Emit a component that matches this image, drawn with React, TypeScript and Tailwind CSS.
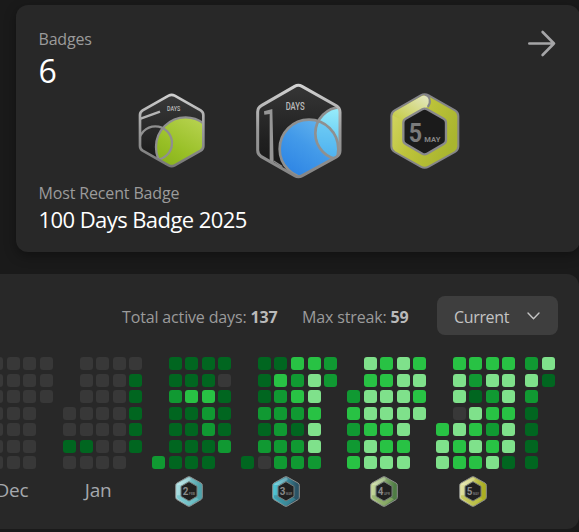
import React from "react";

const LEVELS: Record<string, string> = {
  " ": "bg-transparent",
  "0": "bg-[#383838]",
  "1": "bg-[#016620]",
  "2": "bg-[#109932]",
  "3": "bg-[#28c244]",
  "4": "bg-[#7fe18b]",
};

type Month = { name: string; badge?: { day: string; colors: [string, string, string] }; weeks: string[] };

// Each string is one week, Sunday to Saturday; a blank is a day outside the month.
const MONTHS: Month[] = [
  { name: "Dec", weeks: ["0000000", "0000000", "0000000", "0000000", "000    "] },
  { name: "Jan", weeks: ["   0010", "0000010", "0000000", "0000000", "011111 "] },
  { name: "FEB", badge: { day: "2", colors: ["#a9dde0", "#4fa3ab", "#70c3ca"] }, weeks: ["      2", "1121111", "1131111", "1132211", "101112 "] },
  { name: "MAR", badge: { day: "3", colors: ["#4fc3d2", "#2b5365", "#3a8d9d"] }, weeks: ["      1", "1112120", "1322222", "3232122", "3443442", "22     "] },
  { name: "APR", badge: { day: "4", colors: ["#c5d79a", "#4f7c45", "#8fae68"] }, weeks: ["  23223", "4344344", "3344334", "4444434", "3434   "] },
  { name: "MAY", badge: { day: "5", colors: ["#dfe0a0", "#aaae22", "#bcc048"] }, weeks: ["    344", "3440433", "3214343", "3423234", "3443441"] },
  { name: "", weeks: ["2421111", "41     "] },
];

function MonthBadge({ day, name, colors }: { day: string; name: string; colors: [string, string, string] }) {
  const id = "ring" + day;
  return (
    <svg viewBox="0 0 84 93" className="h-[31px] w-7 shrink-0">
      <defs>
        <linearGradient id={id} x1="0" y1="0.2" x2="1" y2="0.3">
          <stop offset="0.1" stopColor={colors[0]} />
          <stop offset="0.9" stopColor={colors[1]} />
        </linearGradient>
      </defs>
      <path d="M38 3Q42 1 46 3L78 21Q82 23 82 28V64Q82 68 78 71L46 90Q42 92 38 90L6 71Q2 68 2 64V28Q2 23 6 21Z" fill={`url(#${id})`} stroke="#8a8c8b" strokeWidth="3" />
      <path d="M6 58V64Q6 67 10 69L39 86Q42 88 45 86L72 70L58 62L42 72L18 58Z" fill={colors[2]} opacity=".7" />
      <path d="M40 5Q48 3 47 12L20 27L7 27Q6 24 9 23Z" fill="#fff" opacity=".25" />
      <path d="M42 17L66 31V61L42 75L18 61V31Z" fill="#202020" stroke="#777d7b" strokeWidth="3" strokeLinejoin="round" />
      <text x="23" y="58" fontSize="30" fontWeight="bold" fontFamily="Roboto, sans-serif" fill="#8b8b8b" textLength="17" lengthAdjust="spacingAndGlyphs">{day}</text>
      <text x="42" y="58" fontSize="9" fontWeight="bold" fontFamily="Roboto, sans-serif" fill="#777" textLength="18" lengthAdjust="spacingAndGlyphs">{name}</text>
    </svg>
  );
}

const HEX = "M116 47Q125 42 134 47L212 91Q220 96 220 105V198Q220 207 212 212L134 256Q125 261 116 256L38 212Q30 207 30 198V105Q30 96 38 91Z";

function FiftyDays() {
  return (
    <svg viewBox="0 39 270 228" className="h-[76px] w-[90px]">
      <defs>
        <clipPath id="hex50"><path d={HEX} /></clipPath>
        <linearGradient id="lime" x1=".8" y1="0" x2=".2" y2="1"><stop stopColor="#bad453" /><stop offset=".6" stopColor="#97bf25" /><stop offset="1" stopColor="#83ad19" /></linearGradient>
        <linearGradient id="steel50" x1="0" y1="0" x2="0" y2="1"><stop stopColor="#cfcfcf" /><stop offset=".5" stopColor="#9a9a9a" /><stop offset="1" stopColor="#777" /></linearGradient>
        <linearGradient id="dark50" x1="0" y1="0" x2="0" y2="1"><stop stopColor="#393939" /><stop offset="1" stopColor="#171717" /></linearGradient>
      </defs>
      <path d={HEX} fill="url(#dark50)" />
      <g clipPath="url(#hex50)" fill="none" stroke="#8f8f8f" strokeWidth="7">
        <circle cx="167" cy="201" r="89" fill="url(#lime)" />
        <circle cx="76" cy="189" r="50" />
        <path d="M32 116L90 95" stroke="#b5b5b5" />
      </g>
      <path d={HEX} fill="none" stroke="url(#steel50)" strokeWidth="8" />
      <text x="111" y="93" fontSize="21" fontWeight="500" fontFamily="Roboto, sans-serif" fill="#bdbdbd" textLength="40" lengthAdjust="spacingAndGlyphs">DAYS</text>
    </svg>
  );
}

const BIG_HEX = "M149 34Q160 28 171 34L274 92Q285 99 285 112V227Q285 239 274 246L172 302Q160 309 149 302L49 245Q38 238 38 226V111Q38 98 49 92Z";

function HundredDays() {
  return (
    <svg viewBox="0 24 330 288" className="h-24 w-[110px]">
      <defs>
        <clipPath id="hex100"><path d={BIG_HEX} /></clipPath>
        <clipPath id="zero"><circle cx="192" cy="222" r="88" /></clipPath>
        <linearGradient id="blue" x1=".9" y1="0" x2=".2" y2="1"><stop stopColor="#6ab9ee" /><stop offset=".5" stopColor="#439ae9" /><stop offset="1" stopColor="#2c83e4" /></linearGradient>
        <linearGradient id="cyan" x1=".5" y1="0" x2=".4" y2="1"><stop stopColor="#9aeefa" /><stop offset=".5" stopColor="#74d4f6" /><stop offset="1" stopColor="#50b6f2" /></linearGradient>
        <linearGradient id="steel100" x1="0" y1="0" x2="0" y2="1"><stop stopColor="#d2d2d2" /><stop offset=".5" stopColor="#999" /><stop offset="1" stopColor="#858585" /></linearGradient>
        <linearGradient id="dark100" x1="0" y1="0" x2="0" y2="1"><stop stopColor="#363636" /><stop offset=".6" stopColor="#202020" /><stop offset="1" stopColor="#161616" /></linearGradient>
      </defs>
      <path d={BIG_HEX} fill="url(#dark100)" />
      <g clipPath="url(#hex100)" fill="none" stroke="#8f9090" strokeWidth="8">
        <circle cx="192" cy="222" r="88" fill="url(#blue)" stroke="none" />
        <circle cx="290" cy="175" r="79" fill="url(#cyan)" stroke="none" />
        <circle cx="290" cy="175" r="79" fill="#4aa8ee" opacity=".35" stroke="none" clipPath="url(#zero)" />
        <circle cx="192" cy="222" r="88" />
        <circle cx="290" cy="175" r="79" />
      </g>
      <path d="M57 109L82 102L86 266L74 260V117L58 119Z" fill="#969696" />
      <path d="M86 258L112 275" fill="none" stroke="#8a8a8a" strokeWidth="4" />
      <path d={BIG_HEX} fill="none" stroke="url(#steel100)" strokeWidth="9" />
      <text x="122" y="105" fontSize="32" fontWeight="500" fontFamily="Roboto, sans-serif" fill="#bcbcbc" textLength="57" lengthAdjust="spacingAndGlyphs">DAYS</text>
    </svg>
  );
}

function MayBadge() {
  return (
    <svg viewBox="0 39 270 228" className="h-[76px] w-[90px]">
      <defs>
        <linearGradient id="olive" x1="0" y1="0" x2="1" y2=".5"><stop stopColor="#d6d96b" /><stop offset=".5" stopColor="#bdc33a" /><stop offset="1" stopColor="#a9b52f" /></linearGradient>
        <linearGradient id="fold" x1="0" y1="1" x2="1" y2="0"><stop stopColor="#c4cb43" /><stop offset="1" stopColor="#e5e8c5" /></linearGradient>
      </defs>
      <path d="M122 46Q134 39 146 46L225 91Q235 97 235 108V199Q235 210 225 216L146 260Q134 267 122 260L44 216Q34 210 34 199V108Q34 97 44 91Z" fill="url(#olive)" />
      <path d="M38 105Q39 98 47 93L124 49C138 41 151 52 149 68Q148 77 138 83L74 118Q51 117 38 105Z" fill="url(#fold)" />
      <path d="M122 46Q134 39 146 46L225 91Q235 97 235 108V199Q235 210 225 216L146 260Q134 267 122 260L44 216Q34 210 34 199V108Q34 97 44 91Z" fill="none" stroke="#858588" strokeWidth="6" />
      <path d="M134 44C151 47 154 68 143 81" fill="none" stroke="#858588" strokeWidth="6" />
      <path d="M127 88Q134 84 141 88L191 116Q198 120 198 128V180Q198 188 191 192L141 221Q134 225 127 221L77 192Q70 188 70 180V128Q70 120 77 116Z" fill="#1b1b1b" stroke="#89898c" strokeWidth="7" />
      <text x="86" y="185" fontSize="80" fontWeight="bold" fontFamily="Roboto, sans-serif" fill="#7b7b7b" textLength="40" lengthAdjust="spacingAndGlyphs">5</text>
      <text x="133" y="186" fontSize="24" fontWeight="bold" fontFamily="Roboto, sans-serif" fill="#858585" textLength="48" lengthAdjust="spacingAndGlyphs">MAY</text>
    </svg>
  );
}

function BadgesCard() {
  return (
    <section className="ml-4 h-[247px] w-[564px] rounded-xl bg-[#282828] shadow-[0_4px_12px_rgba(0,0,0,0.35)]">
      <div className="flex h-[78px] justify-between pl-[22.5px] pr-6">
        <div className="pt-[22px]">
          <div className="h-6 text-base leading-6 tracking-[-0.2px] text-[#9b9b9b]">Badges</div>
          <div className="h-8 text-[32px] leading-[40px] text-white">6</div>
        </div>
        <svg viewBox="0 0 28 27" className="mt-[25px] h-[27px] w-7 text-[#a5a5a7]" fill="none" stroke="currentColor" strokeWidth="2.6" strokeLinecap="round" strokeLinejoin="round">
          <path d="M1.3 13.5H26M14.6 2L26 13.5L14.6 25" />
        </svg>
      </div>
      <div className="flex h-24 items-center gap-[25px] pl-[114px]">
        <FiftyDays />
        <HundredDays />
        <MayBadge />
      </div>
      <div className="pl-[22.5px]">
        <div className="mt-[2px] h-6 text-base leading-6 tracking-[-0.15px] text-[#9b9b9b]">Most Recent Badge</div>
        <div className="h-8 text-[22px] leading-[29px] tracking-[-0.57px] text-white">100 Days Badge 2025</div>
      </div>
    </section>
  );
}

function ActivityCard() {
  return (
    <section className="mt-[22px] h-[255px] w-[579px] overflow-hidden rounded-r-xl bg-[#282828]">
      <div className="flex h-[83px] justify-end pr-[21px] pt-[22px]">
        <div className="flex h-[39px] items-center text-base text-[#9b9b9b]">
          <div className="mt-0.5 w-[180px] whitespace-nowrap tracking-[-0.15px]">Total active days: <b className="font-bold text-[#bababa]">137</b></div>
          <div className="mt-0.5 w-[135px] whitespace-nowrap tracking-[-0.15px]">Max streak: <b className="font-bold text-[#bababa]">59</b></div>
          <button className="flex h-[39px] w-[121px] items-center justify-between rounded-lg bg-[#3e3e3e] pl-[17px] pr-[18px] text-[#c4c4c4]">
            <span className="mt-0.5 tracking-[-0.35px]">Current</span>
            <svg viewBox="0 0 13 8" className="h-2 w-[13px]" fill="none" stroke="currentColor" strokeWidth="1.4" strokeLinecap="round" strokeLinejoin="round"><path d="M1 1L6.5 6.7L12 1" /></svg>
          </button>
        </div>
      </div>
      <div className="-ml-[26.2px] flex w-max gap-[10px]">
        {MONTHS.map((m, i) => (
          <div key={i} className="shrink-0">
            <div className="flex gap-[3.55px]">
              {m.weeks.map((w, j) => (
                <div key={j} className="flex flex-col gap-[3.55px]">
                  {w.split("").map((d, k) => <div key={k} className={`h-[13px] w-[13px] rounded-[3px] ${LEVELS[d]}`} />)}
                </div>
              ))}
            </div>
            <div className={`flex justify-center pt-[7px] ${m.badge ? "pr-[6px]" : m.name === "Dec" ? "pr-[3px]" : "pr-[9px]"}`}>
              {m.badge ? <MonthBadge name={m.name} {...m.badge} /> : <span className="text-[19px] leading-[28px] tracking-[-0.2px] text-[#a5a8ad]">{m.name}</span>}
            </div>
          </div>
        ))}
      </div>
    </section>
  );
}

export default function App() {
  return (
    <main className="h-[532px] w-[579px] overflow-hidden bg-[#1a1a1a] pt-[5px] font-['Open_Sans','Noto_Sans',sans-serif]">
      <BadgesCard />
      <ActivityCard />
    </main>
  );
}
